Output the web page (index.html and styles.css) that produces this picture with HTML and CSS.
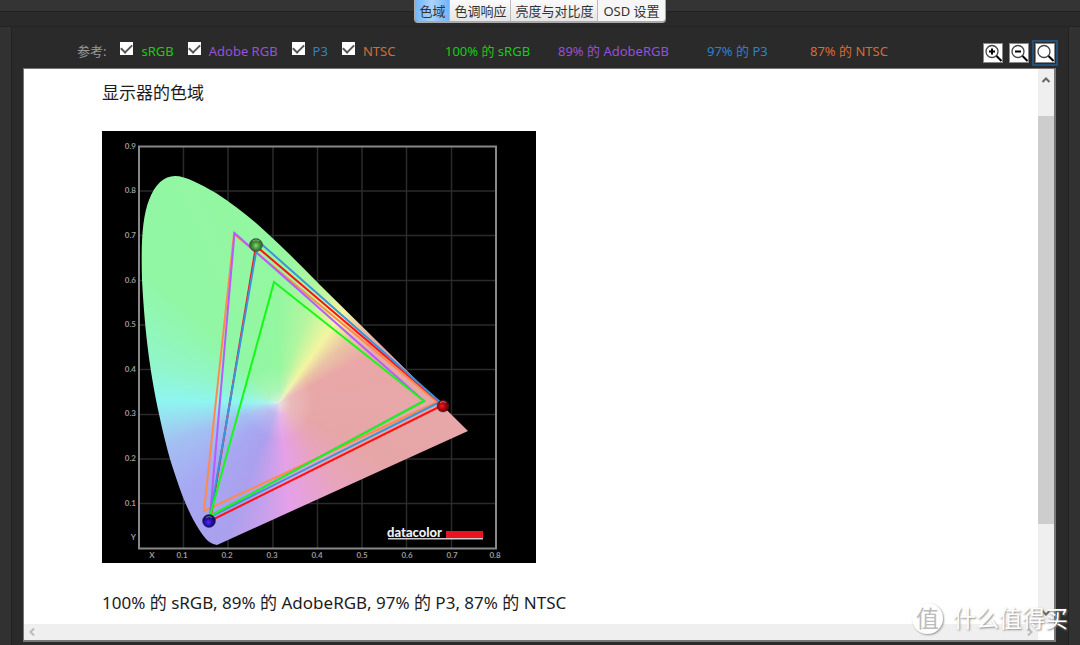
FILE: index.html
```html
<!DOCTYPE html>
<html lang="zh-CN">
<head>
<meta charset="utf-8">
<title>显示器的色域</title>
<link rel="stylesheet" href="styles.css">
</head>
<body>
<div class="app">
  <header class="topbar">
    <nav class="tabs">
      <button class="tab tab-active" type="button">色域</button>
      <button class="tab" type="button">色调响应</button>
      <button class="tab" type="button">亮度与对比度</button>
      <button class="tab" type="button">OSD 设置</button>
    </nav>
  </header>
  <main class="panel">
    <div class="toolbar">
      <div class="refs">
        <span class="refs-title">参考:</span>
        <label class="ref srgb"><input class="check" type="checkbox" checked>sRGB</label>
        <label class="ref adobe"><input class="check" type="checkbox" checked>Adobe RGB</label>
        <label class="ref p3"><input class="check" type="checkbox" checked>P3</label>
        <label class="ref ntsc"><input class="check" type="checkbox" checked>NTSC</label>
      </div>
      <div class="results">
        <span class="srgb">100% 的 sRGB</span>
        <span class="adobe">89% 的 AdobeRGB</span>
        <span class="p3">97% 的 P3</span>
        <span class="ntsc">87% 的 NTSC</span>
      </div>
      <div class="zooms">
        <button class="zoom" type="button" aria-label="放大"><svg viewBox="0 0 18 18"><circle cx="8" cy="7.500" r="6"/><path class="bold" d="M5 7.500h6M8 4.500v6M12.500 12l5 5"/></svg></button>
        <button class="zoom" type="button" aria-label="缩小"><svg viewBox="0 0 18 18"><circle cx="8" cy="7.500" r="6"/><path class="bold" d="M5 7.500h6M12.500 12l5 5"/></svg></button>
        <button class="zoom zoom-active" type="button" aria-label="适合窗口"><svg viewBox="0 0 18 18"><circle cx="8" cy="7.500" r="6"/><path class="bold" d="M12.500 12l5 5"/></svg></button>
      </div>
    </div>
    <section class="viewer">
      <article class="report">
        <h1 class="title">显示器的色域</h1>
        <svg class="chart" viewBox="102 131 434 432">
          <defs>
            <clipPath id="locus"><path d="M217 545C209 544 204 537 200 531C186 510 177 481 170 459C165 441 162 428 159 414C150 371 145 335 142 280C141 245 142 218 149 200C155 184 164 176 175 176C186 176 200 184 216 193C233 204 250 217 267 233C286 250 303 268 320 285L381 345L468 431Z"/></clipPath>
            <radialGradient id="ball-g" cx=".5" cy=".55"><stop offset="0" stop-color="#8bd86c"/><stop offset=".5" stop-color="#429b38"/><stop offset="1" stop-color="#2c5f2c"/></radialGradient>
            <radialGradient id="ball-r" cx=".4" cy=".5"><stop offset="0" stop-color="#f32020"/><stop offset=".5" stop-color="#b40812"/><stop offset="1" stop-color="#6e0509"/></radialGradient>
            <radialGradient id="ball-b" cx=".45" cy=".6"><stop offset="0" stop-color="#5d28e8"/><stop offset=".5" stop-color="#2412b0"/><stop offset="1" stop-color="#120c60"/></radialGradient>
          </defs>
          <rect x="102" y="131" width="434" height="432"/>
          <path class="grid" d="M183.500 147v401M228 147v401M273 147v401M317.500 147v401M362 147v401M406.500 147v401M451.500 147v401M139 191h357M139 235.500h357M139 280.500h357M139 325h357M139 369.500h357M139 414.500h357M139 459h357M139 503.500h357"/>
          <rect class="frame" x="139" y="146.500" width="357" height="402"/>
          <g clip-path="url(#locus)"><foreignObject x="139" y="170" width="332" height="378"><div class="spectrum"></div></foreignObject></g>
          <g class="tri">
            <path stroke="#ff8a4c" d="M234 234L437 402L204 511Z"/>
            <path stroke="#b45cff" d="M234.500 233L424 401L210 516Z"/>
            <path stroke="#f11" d="M256 246L443 405L210 521Z"/>
            <path stroke="#3b94dc" d="M258 241L440 402L210 517Z"/>
            <path stroke="#14fa14" d="M274 282L424 401L210 516Z"/>
          </g>
          <g class="ball">
            <circle cx="256" cy="245" r="6.500" fill="url(#ball-g)"/>
            <circle cx="443" cy="406" r="6" fill="url(#ball-r)"/>
            <circle cx="209" cy="521" r="6.500" fill="url(#ball-b)"/>
            <path d="M252.500 241q3.500-2.500 7 0M440 402.500q3-2 6 0M206 517.500q3-2 6 0"/>
          </g>
          <g class="axis" text-anchor="end">
            <text x="136" y="149">0.9</text><text x="136" y="193">0.8</text><text x="136" y="238">0.7</text><text x="136" y="283">0.6</text><text x="136" y="327">0.5</text><text x="136" y="372">0.4</text><text x="136" y="416">0.3</text><text x="136" y="461">0.2</text><text x="136" y="506">0.1</text><text x="136" y="540">Y</text>
          </g>
          <g class="axis" text-anchor="middle">
            <text x="152" y="558">X</text><text x="182" y="558">0.1</text><text x="227" y="558">0.2</text><text x="272" y="558">0.3</text><text x="317" y="558">0.4</text><text x="362" y="558">0.5</text><text x="407" y="558">0.6</text><text x="452" y="558">0.7</text><text x="495" y="558">0.8</text>
          </g>
          <text class="brand" x="387" y="537">datacolor</text>
          <rect x="446" y="531" width="37" height="7" fill="#e81422"/>
          <rect x="388" y="538" width="95" height="1.500" fill="#ccc"/>
        </svg>
        <p class="summary">100% 的 sRGB, 89% 的 AdobeRGB, 97% 的 P3, 87% 的 NTSC</p>
      </article>
      <div class="vscroll">
        <button class="arrow" type="button" aria-label="向上"><svg viewBox="0 0 10 10"><path d="M1.500 7L5 3.500 8.500 7"/></svg></button>
        <div class="track"><div class="thumb"></div></div>
        <button class="arrow" type="button" aria-label="向下"><svg viewBox="0 0 10 10"><path d="M1.500 3L5 6.500 8.500 3"/></svg></button>
      </div>
      <div class="hscroll">
        <button class="arrow dim" type="button" aria-label="向左"><svg viewBox="0 0 10 10"><path d="M7 1.500L3.500 5 7 8.500"/></svg></button>
        <button class="arrow dim" type="button" aria-label="向右"><svg viewBox="0 0 10 10"><path d="M3 1.500L6.500 5 3 8.500"/></svg></button>
      </div>
    </section>
  </main>
  <div class="watermark"><span class="seal">值</span><span>什么值得买</span></div>
</div>
</body>
</html>
```
FILE: styles.css
```css
* { box-sizing: border-box; }
body {
  margin: 0;
  background: #313131;
  color: #1c1c1c;
  font-family: "Noto Sans", "Noto Sans CJK SC", sans-serif;
}
button { padding: 0; border: 0; font: inherit; }
.app { position: relative; display: flex; flex-direction: column; min-height: 100vh; }
.topbar {
  display: flex;
  justify-content: center;
  height: 27px;
  background: linear-gradient(#343434 0 11px, #202020 11px 12px, #2a2a2a 12px 26px, #222 26px);
}
.tabs {
  display: flex;
  height: 23px;
  border: 1px solid #aaa;
  border-top: 0;
  border-bottom: 2px solid #aaa;
  border-radius: 0 0 4px 4px;
  overflow: hidden;
}
.tab {
  padding: 0 4px;
  border-right: 1px solid #bbb;
  background: linear-gradient(#fafafa, #e6e6e6);
  color: #333;
  font-size: 13px;
  line-height: 20px;
}
.tab:last-child { padding: 0 5px; border-right: 0; background: #f6f6f6; }
.tab-active { background: linear-gradient(90deg, #72b4f8, #a9d4ff 50%, #72b4f8); }
.panel {
  flex: 1;
  display: flex;
  flex-direction: column;
  margin: 0 11px;
  padding: 0 12px 3px 11px;
  border-left: 1px solid #222;
  border-right: 1px solid #222;
  background: #2a2a2a;
}
.toolbar {
  display: flex;
  align-items: center;
  height: 41px;
  padding-left: 54px;
  font-size: 13px;
  line-height: 18px;
  white-space: nowrap;
}
.refs { display: flex; align-items: center; gap: 14px; width: 368px; padding-top: 6px; }
.zooms { align-self: flex-end; display: flex; gap: 4px; margin-left: auto; padding-bottom: 4px; }
.refs-title { color: #999; }
.ref { display: flex; align-items: center; gap: 8px; }
.check {
  appearance: none;
  width: 13px;
  height: 13px;
  margin: 0 0 4px;
  background: #fff;
  display: grid;
  place-items: center;
}
.check:checked::before {
  content: "";
  width: 9px;
  height: 5px;
  margin-bottom: 3px;
  border: solid #555;
  border-width: 0 0 2px 2px;
  transform: rotate(-45deg);
}
.srgb { color: #14cd14; }
.adobe { color: #9650dc; }
.p3 { color: #2f82c8; }
.ntsc { color: #d86a38; }
.results { display: grid; grid-template-columns: 113px 149px 103px auto; padding-top: 6px; }
.zoom {
  width: 22px;
  height: 22px;
  border: 1px solid #2a2a2a;
  background: #2a2a2a;
  display: grid;
  place-items: center;
}
.zoom svg { width: 20px; height: 20px; background: #fff; border: 1px solid #888; }
.zoom circle { fill: none; stroke: #444; stroke-width: 1.3px; }
.zoom .bold { fill: none; stroke: #000; stroke-width: 2px; }
.zoom-active { outline: 2px solid #225078; }
.viewer {
  flex: 1;
  display: grid;
  grid-template-columns: 1fr 16px;
  grid-template-rows: 1fr 16px;
  border: 1px solid #777;
  border-width: 1px 2px 2px 1px;
  background: #fff;
}
.report { padding: 12px 78px 0; }
.title { margin: 0; font-size: 17px; font-weight: 400; line-height: 24px; }
.chart { display: block; width: 434px; height: 432px; margin: 26px 0; }
.summary { margin: 0; font-size: 17px; line-height: 28px; }
.grid { fill: none; stroke: #2b2b2b; stroke-width: 1.5px; }
.frame { fill: none; stroke: #888; stroke-width: 2px; }
.spectrum {
  width: 332px;
  height: 378px;
  background:
    radial-gradient(circle at 140px 233px, #f0f0f0bb 0, #f0f0f044 12px, #f0f0f000 36px),
    conic-gradient(from 0deg at 140px 233px,
      #94f7a0 0deg, #b3f5a0 17deg, #f3f5a1 35deg, #eac3a5 48deg, #e9a7a7 62deg, #e6a6a8 120deg,
      #e8a4bc 145deg, #e5a0e8 174deg, #aaa0ee 202deg, #a7a7f2 225deg, #a3c0f2 250deg,
      #8ff5f0 271deg, #91f6cb 287deg, #91f7a5 315deg, #94f7a0 360deg);
}
.tri path { fill: none; stroke-width: 2px; }
.ball circle { stroke: #222; stroke-opacity: .4; }
.ball path { fill: none; stroke: #fff; stroke-opacity: .4; }
.axis { fill: #999; font-family: Lato, sans-serif; font-size: 8px; font-weight: 700; }
.brand { fill: #eee; font-family: Lato, sans-serif; font-size: 13px; font-weight: 900; }
.vscroll { display: flex; flex-direction: column; background: #efefef; }
.arrow { width: 16px; height: 22px; background: none; display: grid; place-items: center; }
.arrow svg { width: 10px; height: 10px; fill: none; stroke: #666; stroke-width: 2px; }
.dim svg { stroke: #bbb; }
.track { flex: 1; padding-top: 25px; }
.thumb { height: 84%; background: #cdcdcd; }
.hscroll { display: flex; justify-content: space-between; align-items: center; background: #efefef; }
.hscroll .arrow { height: 16px; }
.watermark {
  position: absolute;
  right: 12px;
  bottom: 11px;
  display: flex;
  align-items: center;
  gap: 10px;
  color: #fff;
  font-size: 23px;
  line-height: 32px;
  text-shadow: 1px 1px 2px #888;
}
.seal {
  width: 31px;
  height: 31px;
  border-radius: 50%;
  background: #fff;
  box-shadow: 1px 1px 2px #999;
  color: #bbb;
  line-height: 30px;
  text-align: center;
  text-shadow: none;
}
```
